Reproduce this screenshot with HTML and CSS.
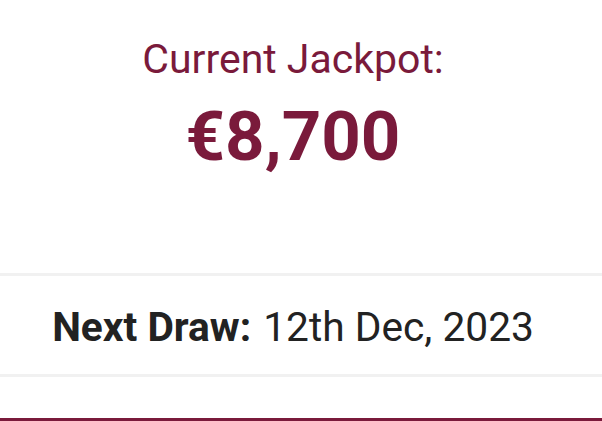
FILE: index.html
```html
<!DOCTYPE html>
<html>
<head>
<meta charset="utf-8">
<link rel="stylesheet" href="styles.css">
</head>
<body>
<div class="page">
  <section class="jackpot">
    <div class="jackpot-label">Current Jackpot:</div>
    <div class="jackpot-amount">€8,700</div>
  </section>
  <section class="draw">
    <span class="draw-label">Next Draw:</span> <span class="draw-date">12th Dec, 2023</span>
  </section>
  <div class="spacer"></div>
</div>
</body>
</html>
```

FILE: styles.css
```css
html, body {
  margin: 0;
  padding: 0;
  background: #ffffff;
}
.page {
  width: 602px;
  height: 421px;
  display: flex;
  flex-direction: column;
  font-family: Roboto, "Liberation Sans", sans-serif;
  overflow: hidden;
}
.jackpot {
  height: 273px;
  flex: none;
  display: flex;
  flex-direction: column;
  align-items: center;
  padding: 35px 16px 0 0;
  box-sizing: border-box;
  color: #7a1a3b;
}
.jackpot-label {
  font-size: 41px;
  line-height: 48px;
  font-weight: 400;
}
.jackpot-amount {
  font-size: 69px;
  line-height: 80px;
  font-weight: 700;
  margin-top: 14px;
}
.draw {
  flex: none;
  border-top: 3px solid #f1f1f1;
  border-bottom: 3px solid #f1f1f1;
  height: 95px;
  padding: 3px 16px 0 0;
  display: flex;
  align-items: center;
  justify-content: center;
  gap: 12px;
  font-size: 40.7px;
  color: #222222;
}
.draw-label {
  font-weight: 700;
}
.spacer {
  flex: 1;
  border-bottom: 3px solid #7a1a3b;
}
```
